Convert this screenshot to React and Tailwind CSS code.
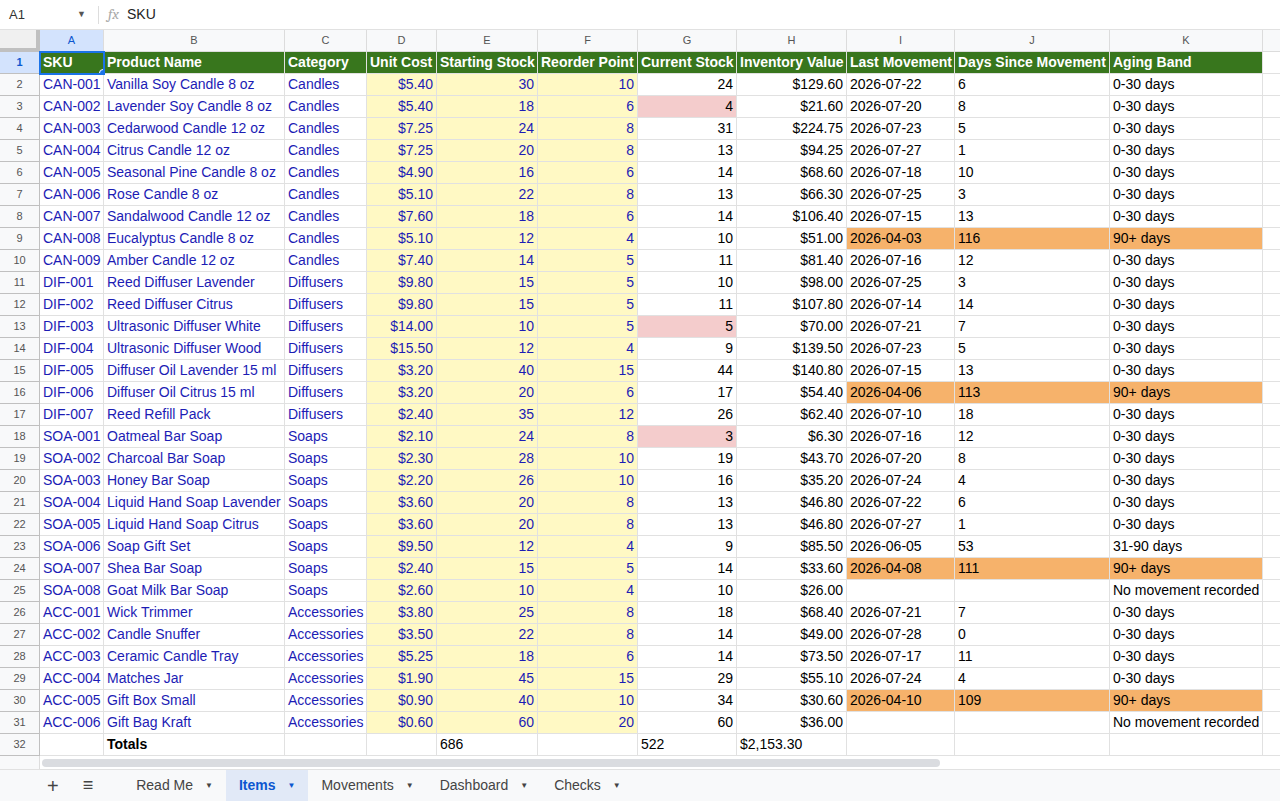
import React from 'react';

const cols = [
  { l: 'A', w: 64 }, { l: 'B', w: 181 }, { l: 'C', w: 82 }, { l: 'D', w: 70 }, { l: 'E', w: 101 },
  { l: 'F', w: 100 }, { l: 'G', w: 99 }, { l: 'H', w: 110 }, { l: 'I', w: 108 }, { l: 'J', w: 155 }, { l: 'K', w: 153 },
];
const heads = ['SKU', 'Product Name', 'Category', 'Unit Cost', 'Starting Stock', 'Reorder Point', 'Current Stock', 'Inventory Value', 'Last Movement', 'Days Since Movement', 'Aging Band'];

const raw = `CAN-001|Vanilla Soy Candle 8 oz|Candles|$5.40|30|10|24|$129.60|2026-07-22|6|0-30 days
CAN-002|Lavender Soy Candle 8 oz|Candles|$5.40|18|6|4|$21.60|2026-07-20|8|0-30 days
CAN-003|Cedarwood Candle 12 oz|Candles|$7.25|24|8|31|$224.75|2026-07-23|5|0-30 days
CAN-004|Citrus Candle 12 oz|Candles|$7.25|20|8|13|$94.25|2026-07-27|1|0-30 days
CAN-005|Seasonal Pine Candle 8 oz|Candles|$4.90|16|6|14|$68.60|2026-07-18|10|0-30 days
CAN-006|Rose Candle 8 oz|Candles|$5.10|22|8|13|$66.30|2026-07-25|3|0-30 days
CAN-007|Sandalwood Candle 12 oz|Candles|$7.60|18|6|14|$106.40|2026-07-15|13|0-30 days
CAN-008|Eucalyptus Candle 8 oz|Candles|$5.10|12|4|10|$51.00|2026-04-03|116|90+ days
CAN-009|Amber Candle 12 oz|Candles|$7.40|14|5|11|$81.40|2026-07-16|12|0-30 days
DIF-001|Reed Diffuser Lavender|Diffusers|$9.80|15|5|10|$98.00|2026-07-25|3|0-30 days
DIF-002|Reed Diffuser Citrus|Diffusers|$9.80|15|5|11|$107.80|2026-07-14|14|0-30 days
DIF-003|Ultrasonic Diffuser White|Diffusers|$14.00|10|5|5|$70.00|2026-07-21|7|0-30 days
DIF-004|Ultrasonic Diffuser Wood|Diffusers|$15.50|12|4|9|$139.50|2026-07-23|5|0-30 days
DIF-005|Diffuser Oil Lavender 15 ml|Diffusers|$3.20|40|15|44|$140.80|2026-07-15|13|0-30 days
DIF-006|Diffuser Oil Citrus 15 ml|Diffusers|$3.20|20|6|17|$54.40|2026-04-06|113|90+ days
DIF-007|Reed Refill Pack|Diffusers|$2.40|35|12|26|$62.40|2026-07-10|18|0-30 days
SOA-001|Oatmeal Bar Soap|Soaps|$2.10|24|8|3|$6.30|2026-07-16|12|0-30 days
SOA-002|Charcoal Bar Soap|Soaps|$2.30|28|10|19|$43.70|2026-07-20|8|0-30 days
SOA-003|Honey Bar Soap|Soaps|$2.20|26|10|16|$35.20|2026-07-24|4|0-30 days
SOA-004|Liquid Hand Soap Lavender|Soaps|$3.60|20|8|13|$46.80|2026-07-22|6|0-30 days
SOA-005|Liquid Hand Soap Citrus|Soaps|$3.60|20|8|13|$46.80|2026-07-27|1|0-30 days
SOA-006|Soap Gift Set|Soaps|$9.50|12|4|9|$85.50|2026-06-05|53|31-90 days
SOA-007|Shea Bar Soap|Soaps|$2.40|15|5|14|$33.60|2026-04-08|111|90+ days
SOA-008|Goat Milk Bar Soap|Soaps|$2.60|10|4|10|$26.00|||No movement recorded
ACC-001|Wick Trimmer|Accessories|$3.80|25|8|18|$68.40|2026-07-21|7|0-30 days
ACC-002|Candle Snuffer|Accessories|$3.50|22|8|14|$49.00|2026-07-28|0|0-30 days
ACC-003|Ceramic Candle Tray|Accessories|$5.25|18|6|14|$73.50|2026-07-17|11|0-30 days
ACC-004|Matches Jar|Accessories|$1.90|45|15|29|$55.10|2026-07-24|4|0-30 days
ACC-005|Gift Box Small|Accessories|$0.90|40|10|34|$30.60|2026-04-10|109|90+ days
ACC-006|Gift Bag Kraft|Accessories|$0.60|60|20|60|$36.00|||No movement recorded`;
const rows = raw.split('\n').map((r) => r.split('|'));

const Cell = ({ w, className = '', children }) => (
  <div style={{ width: w }} className={`shrink-0 h-full border-r border-b border-[#e1e1e1] px-[3px] flex items-center overflow-hidden whitespace-nowrap ${className}`}>
    {children}
  </div>
);

export default function App() {
  return (
    <div className="w-[1280px] h-[801px] overflow-hidden bg-white text-[14px] text-black flex flex-col" style={{ fontFamily: '"Liberation Sans", Arial, sans-serif' }}>
      {/* formula bar */}
      <div className="h-[30px] flex items-center border-b border-[#e1e1e1] text-[13px] text-[#333]">
        <div className="w-[96px] pl-[9px] flex items-center justify-between pr-[10px]">
          <span>A1</span>
          <span className="text-[9px] text-[#555]">▼</span>
        </div>
        <div className="h-[18px] border-l border-[#ddd] ml-[2px]" />
        <span className="ml-[9px] italic text-[#aaa] font-serif text-[15px]">fx</span>
        <span className="ml-[8px] text-[14px] text-[#222]">SKU</span>
      </div>
      {/* column letters */}
      <div className="h-[22px] flex text-[11px] text-[#555] bg-[#f8f9fa]">
        <div className="w-[40px] shrink-0 border-r-4 border-b-4 border-[#c0c0c0] bg-[#f0f0f0]" />
        {cols.map((c, i) => (
          <div key={c.l} style={{ width: c.w }} className={`shrink-0 border-r border-b border-[#dcdcdc] flex items-center justify-center ${i === 0 ? 'bg-[#d3e3fd] text-[#0b57d0]' : ''}`}>{c.l}</div>
        ))}
        <div className="flex-1 border-b border-[#dcdcdc]" />
      </div>
      {/* header row */}
      <div className="h-[22px] flex">
        <div className="w-[40px] shrink-0 border-r border-b border-[#c0c0c0] bg-[#d3e3fd] text-[11px] font-bold text-[#0b57d0] flex items-center justify-center">1</div>
        {cols.map((c, i) => (
          <Cell key={c.l} w={c.w} className={`bg-[#38761d] text-white font-bold border-[#38761d] ${i === 0 ? 'outline outline-2 outline-[#1a73e8] -outline-offset-1 relative' : ''}`}>
            {heads[i]}
            {i === 0 && <span className="absolute -right-[4px] -bottom-[4px] w-[8px] h-[8px] rounded-full bg-[#1a73e8] border border-white" />}
          </Cell>
        ))}
        <div className="flex-1 border-b border-[#e1e1e1]" />
      </div>
      {rows.map((r, ri) => {
        const low = Number(r[6]) <= Number(r[5]);
        const old = r[10] === '90+ days';
        return (
          <div key={ri} className="h-[22px] flex">
            <div className="w-[40px] shrink-0 border-r border-b border-[#c0c0c0] bg-[#f8f9fa] text-[11px] text-[#555] flex items-center justify-center">{ri + 2}</div>
            <Cell w={64} className="text-[#1c1cb5]">{r[0]}</Cell>
            <Cell w={181} className="text-[#1c1cb5]">{r[1]}</Cell>
            <Cell w={82} className="text-[#1c1cb5]">{r[2]}</Cell>
            <Cell w={70} className="text-[#1c1cb5] bg-[#fff9c4] justify-end">{r[3]}</Cell>
            <Cell w={101} className="text-[#1c1cb5] bg-[#fff9c4] justify-end">{r[4]}</Cell>
            <Cell w={100} className="text-[#1c1cb5] bg-[#fff9c4] justify-end">{r[5]}</Cell>
            <Cell w={99} className={`justify-end ${low ? 'bg-[#f4cccc]' : ''}`}>{r[6]}</Cell>
            <Cell w={110} className="justify-end">{r[7]}</Cell>
            <Cell w={108} className={old ? 'bg-[#f6b26b]' : ''}>{r[8]}</Cell>
            <Cell w={155} className={old ? 'bg-[#f6b26b]' : ''}>{r[9]}</Cell>
            <Cell w={153} className={old ? 'bg-[#f6b26b]' : ''}>{r[10]}</Cell>
            <div className="flex-1 border-b border-[#e1e1e1]" />
          </div>
        );
      })}
      <div className="h-[22px] flex">
        <div className="w-[40px] shrink-0 border-r border-b border-[#c0c0c0] bg-[#f8f9fa] text-[11px] text-[#555] flex items-center justify-center">32</div>
        <Cell w={64} />
        <Cell w={181} className="font-bold">Totals</Cell>
        <Cell w={82} />
        <Cell w={70} />
        <Cell w={101}>686</Cell>
        <Cell w={100} />
        <Cell w={99}>522</Cell>
        <Cell w={110}>$2,153.30</Cell>
        <Cell w={108} />
        <Cell w={155} />
        <Cell w={153} />
        <div className="flex-1 border-b border-[#e1e1e1]" />
      </div>
      {/* scrollbar */}
      <div className="h-[14px] flex items-center border-b border-[#e1e1e1]">
        <div className="w-[40px] h-full bg-[#f8f9fa] border-r border-[#ddd]" />
        <div className="ml-[2px] w-[898px] h-[8px] rounded bg-[#dadce0]" />
      </div>
      {/* tabs */}
      <div className="flex-1 bg-[#f8f9fa] flex items-stretch text-[14px] text-[#444]">
        <div className="w-[40px]" />
        <div className="flex items-center gap-[24px] pl-[7px] pr-[30px] text-[20px] text-[#444]">
          <span className="font-light">+</span>
          <span className="text-[18px]">≡</span>
        </div>
        {['Read Me', 'Items', 'Movements', 'Dashboard', 'Checks'].map((t) => (
          <div key={t} className={`flex items-center gap-[12px] px-[13px] ${t === 'Items' ? 'bg-[#e1e9f7] text-[#0b57d0] font-bold' : ''}`}>
            {t}<span className="text-[8px]">▼</span>
          </div>
        ))}
      </div>
    </div>
  );
}
